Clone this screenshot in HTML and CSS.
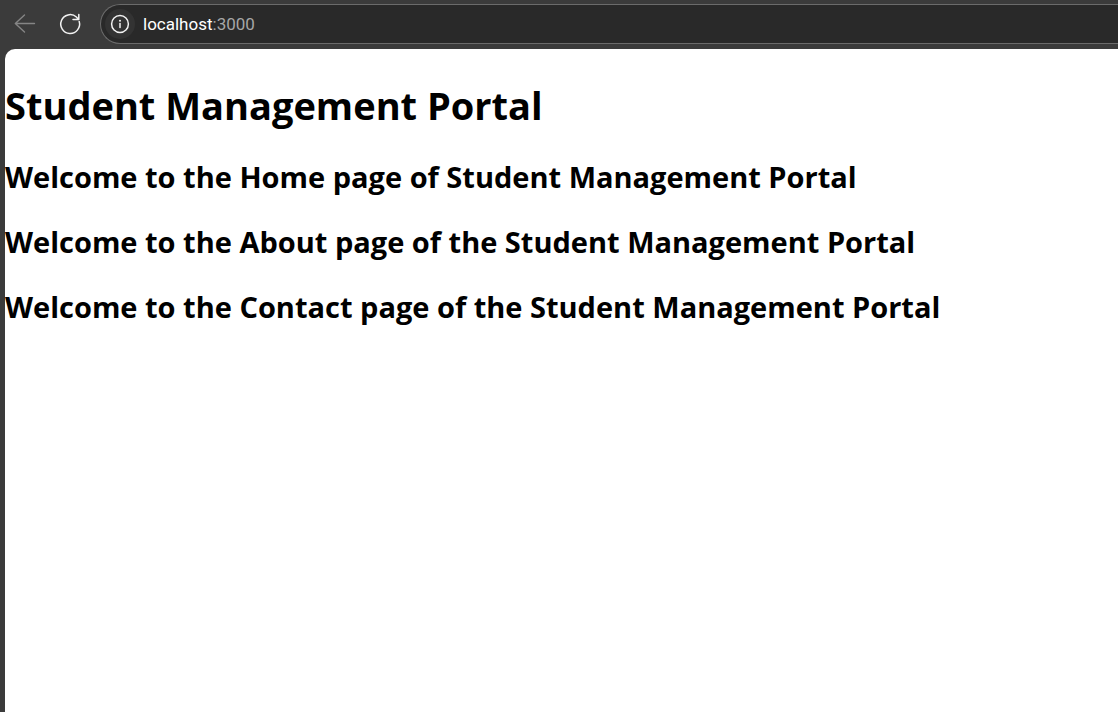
FILE: index.html
```html
<!DOCTYPE html>
<html lang="en">
<head>
<meta charset="utf-8">
<title>Student Management Portal</title>
<link rel="stylesheet" href="styles.css">
</head>
<body class="window">
<header class="toolbar">
  <button class="nav-button nav-button--disabled" type="button" aria-label="Back">
    <svg width="24" height="24" viewBox="0 0 24 24" fill="none" stroke="currentColor" stroke-width="1.4" stroke-linecap="round" stroke-linejoin="round"><path d="M21.5 11.5H2.3M11.5 3L2.3 11.5L11.5 20"/></svg>
  </button>
  <button class="nav-button" type="button" aria-label="Refresh">
    <svg width="24" height="24" viewBox="0 0 24 24" fill="none" stroke="currentColor" stroke-width="1.5" stroke-linecap="round" stroke-linejoin="round"><path d="M21.2 9.4A9.4 9.4 0 1 1 18.4 5L20.6 7.4M20.8 2.5V7.6H15"/></svg>
  </button>
  <div class="address">
    <button class="site-info" type="button" aria-label="View site information">
      <svg width="20" height="20" viewBox="0 0 20 20" fill="none" stroke="currentColor" stroke-width="1.5" stroke-linecap="round"><circle cx="10" cy="10" r="8.4"/><path d="M10 9.4V13.6"/><circle cx="10" cy="6.7" r="1" fill="currentColor" stroke="none"/></svg>
    </button>
    <div class="url" role="textbox" contenteditable="true" spellcheck="false" aria-label="Address"><span class="host">localhost</span>:3000</div>
  </div>
</header>
<main class="page">
  <h1 class="title">Student Management Portal</h1>
  <h2 class="welcome">Welcome to the Home page of Student Management Portal</h2>
  <h2 class="welcome">Welcome to the About page of the Student Management Portal</h2>
  <h2 class="welcome">Welcome to the Contact page of the Student Management Portal</h2>
</main>
</body>
</html>
```
FILE: styles.css
```css
* {
  box-sizing: border-box;
}

.window {
  display: flex;
  flex-direction: column;
  min-height: 100vh;
  margin: 0;
  padding-left: 5px;
  overflow-x: hidden;
  background: #3b3b3b;
  font-family: "Open Sans", "Noto Sans", sans-serif;
}

.toolbar {
  display: flex;
  align-items: center;
  padding: 4px 0 5px;
}

.nav-button {
  display: flex;
  align-items: center;
  justify-content: center;
  width: 40px;
  height: 40px;
  margin-right: 5px;
  padding: 0;
  border: 0;
  background: none;
  color: #f2f2f2;
}

.nav-button--disabled {
  color: #858585;
}

.address {
  display: flex;
  flex: 1;
  align-items: center;
  height: 40px;
  margin-left: 5px;
  padding-left: 4px;
  border: 1px solid #6b6b6b;
  border-right: 0;
  border-radius: 20px 0 0 20px;
  background: #292929;
}

.site-info {
  display: flex;
  align-items: center;
  justify-content: center;
  width: 30px;
  height: 30px;
  padding: 0;
  border: 0;
  border-radius: 50%;
  background: #333333;
  color: #f2f2f2;
}

.url {
  flex: 1;
  margin-left: 8px;
  outline: 0;
  color: #a6a6a6;
  font-family: Roboto, "Open Sans", sans-serif;
  font-size: 17px;
  line-height: 24px;
}

.host {
  color: #ffffff;
}

.page {
  flex: 1;
  padding-top: 29px;
  border-top-left-radius: 10px;
  background: #ffffff;
  color: #000000;
}

.title {
  margin: 0 0 25px;
  font-size: 38px;
  font-weight: 700;
  line-height: 54px;
}

.welcome {
  margin: 0 0 25px;
  font-size: 29px;
  font-weight: 700;
  line-height: 40px;
}
```
